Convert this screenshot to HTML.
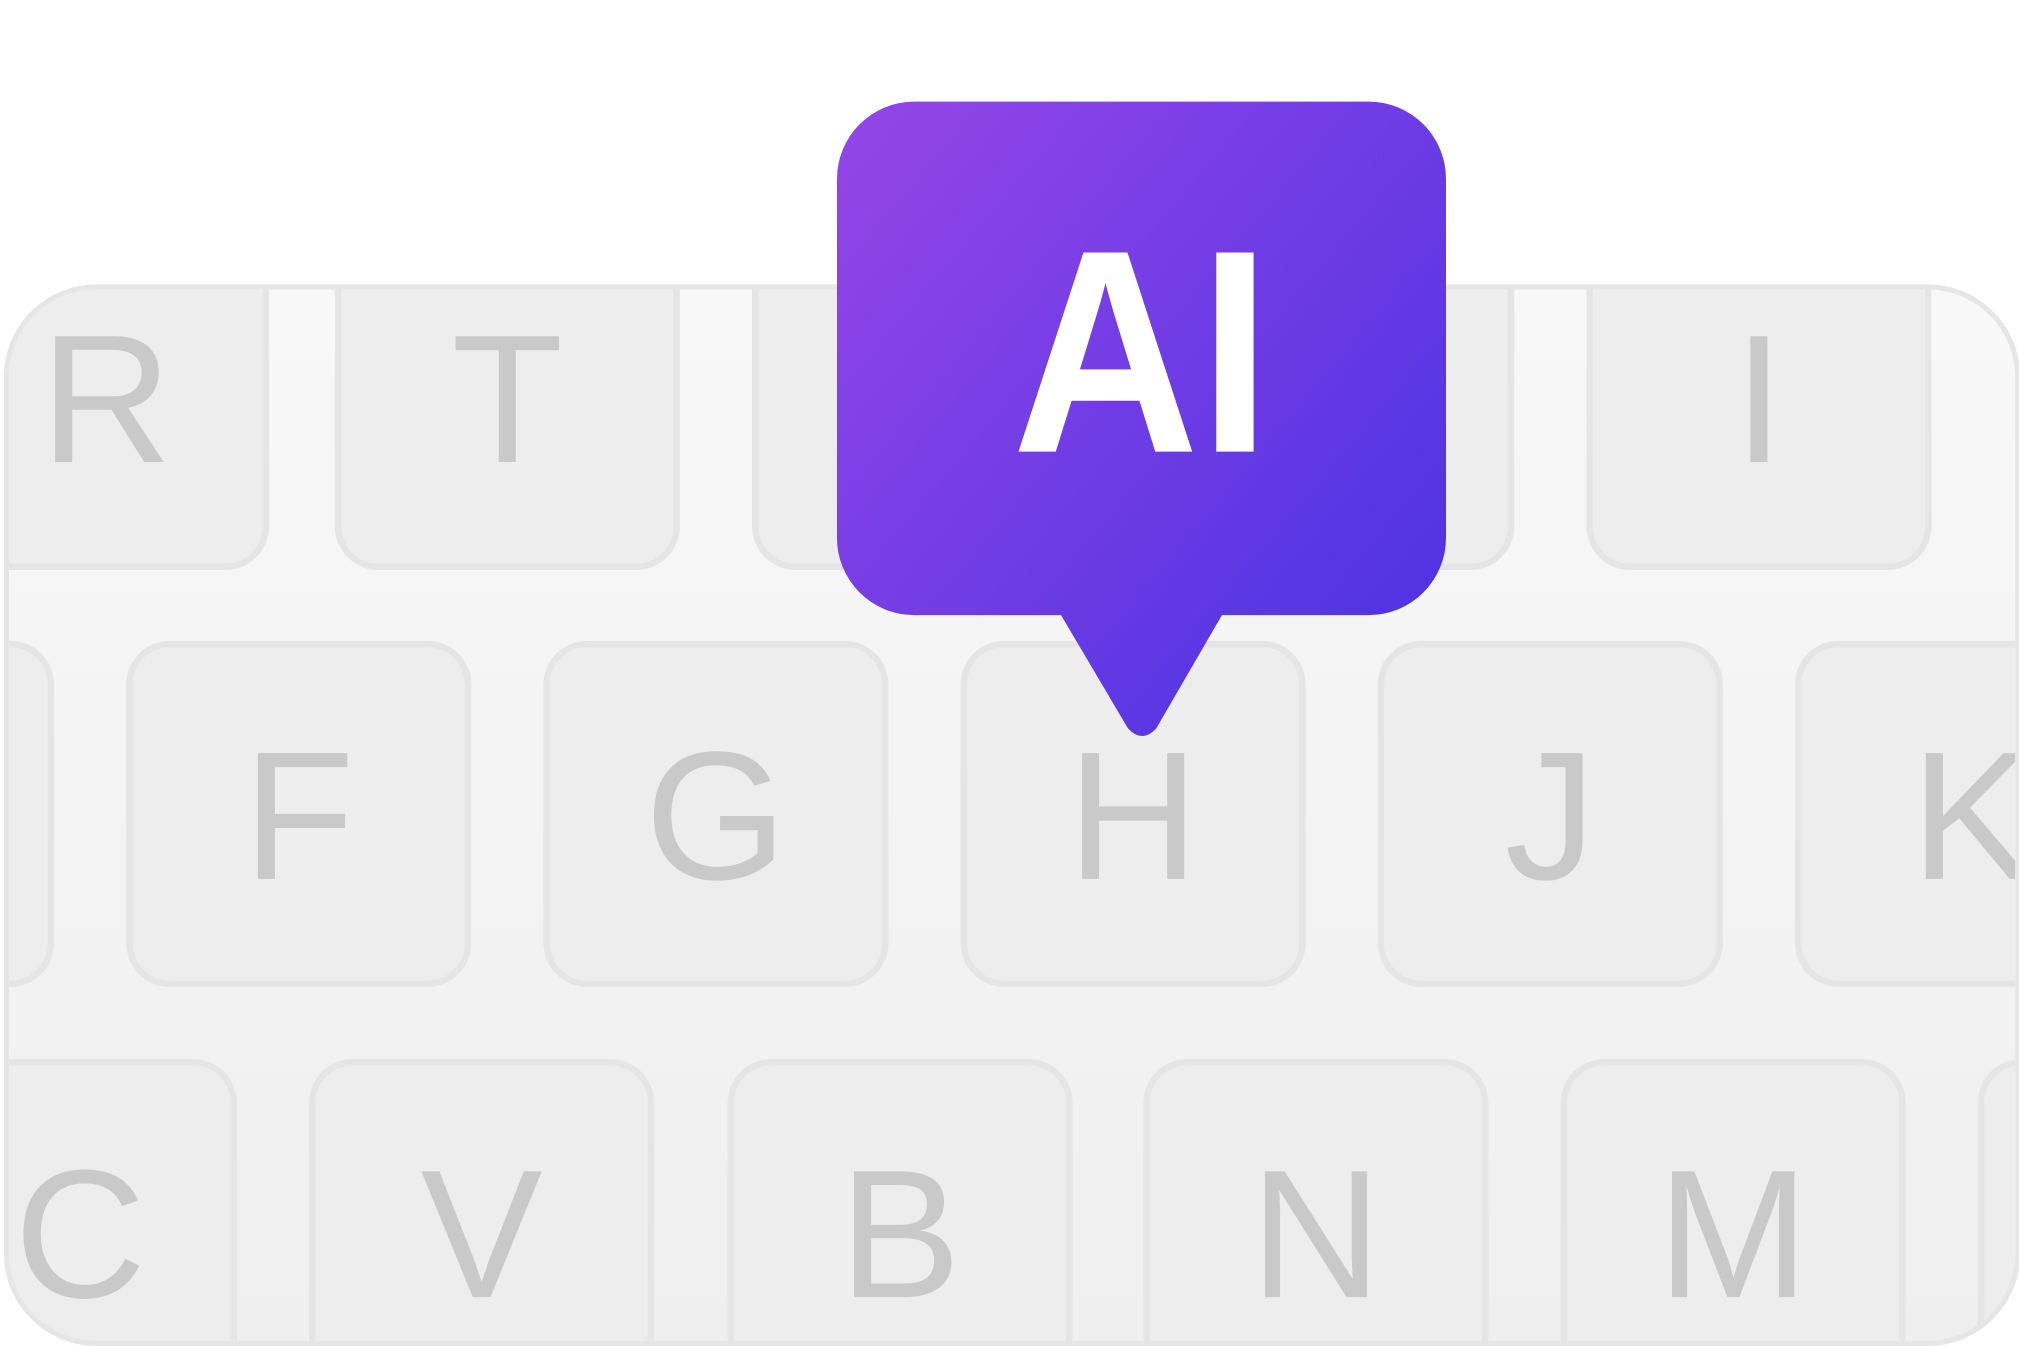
<!DOCTYPE html>
<html><head><meta charset="utf-8"><style>
html,body{margin:0;padding:0;background:#fff;width:2019px;height:1346px;overflow:hidden}
#s{position:absolute;left:0;top:0;width:1568px;height:1046px;transform:scale(1.28763,1.28681);transform-origin:0 0;overflow:hidden}
.kb{position:absolute;left:3px;top:221px;width:1566px;height:825px;box-sizing:border-box;border:4px solid #e6e6e6;border-radius:72px;background:linear-gradient(180deg,#f8f8f8,#efefef);overflow:hidden}
.k{position:absolute;box-sizing:border-box;border:5px solid #e5e5e5;border-radius:34px;background:#ededed;color:#c9c9c9;font-family:"Liberation Sans",sans-serif;font-size:142px;display:flex;align-items:center;justify-content:center;line-height:1}
</style></head><body><div id="s">
<div class="kb">
<div class="k" style="left:-71px;top:-80px;width:273px;height:298px;padding-top:34px;padding-left:20px">R</div>
<div class="k" style="left:253px;top:-80px;width:268px;height:298px;padding-top:34px">T</div>
<div class="k" style="left:577px;top:-80px;width:268px;height:298px"></div>
<div class="k" style="left:901px;top:-80px;width:268px;height:298px"></div>
<div class="k" style="left:1225px;top:-80px;width:268px;height:298px;padding-top:34px">I</div>
<div class="k" style="left:-233px;top:273px;width:268px;height:269px"></div>
<div class="k" style="left:91px;top:273px;width:268px;height:269px;padding-top:4px">F</div>
<div class="k" style="left:415px;top:273px;width:268px;height:269px;padding-top:4px">G</div>
<div class="k" style="left:739px;top:273px;width:268px;height:269px;padding-top:4px">H</div>
<div class="k" style="left:1063px;top:273px;width:268px;height:269px;padding-top:4px">J</div>
<div class="k" style="left:1387px;top:273px;width:268px;height:269px;justify-content:flex-start;padding-left:85px;padding-top:4px">K</div>
<div class="k" style="left:-91px;top:598px;width:268px;height:300px;padding-bottom:26px;justify-content:flex-start;padding-left:90px">C</div>
<div class="k" style="left:233px;top:598px;width:268px;height:300px;padding-bottom:26px">V</div>
<div class="k" style="left:558px;top:598px;width:268px;height:300px;padding-bottom:26px">B</div>
<div class="k" style="left:881px;top:598px;width:268px;height:300px;padding-bottom:26px">N</div>
<div class="k" style="left:1205px;top:598px;width:268px;height:300px;padding-bottom:26px">M</div>
<div class="k" style="left:1529px;top:598px;width:268px;height:300px"></div>
</div>
<svg style="position:absolute;left:0;top:0" width="1568" height="1046">
<defs><linearGradient id="g" x1="650" y1="79" x2="1123" y2="478" gradientUnits="userSpaceOnUse"><stop offset="0" stop-color="#9646e7"/><stop offset="1" stop-color="#4e33e3"/></linearGradient></defs>
<path d="M710 79H1063A60 60 0 0 1 1123 139V418A60 60 0 0 1 1063 478H949L898 566Q887 578 876 566L824 478H710A60 60 0 0 1 650 418V139A60 60 0 0 1 710 79Z" fill="url(#g)"/>
<text x="786" y="351" font-family="Liberation Sans,sans-serif" font-weight="bold" font-size="225" fill="#fff" textLength="201" lengthAdjust="spacingAndGlyphs">AI</text>
</svg>
</div></body></html>
